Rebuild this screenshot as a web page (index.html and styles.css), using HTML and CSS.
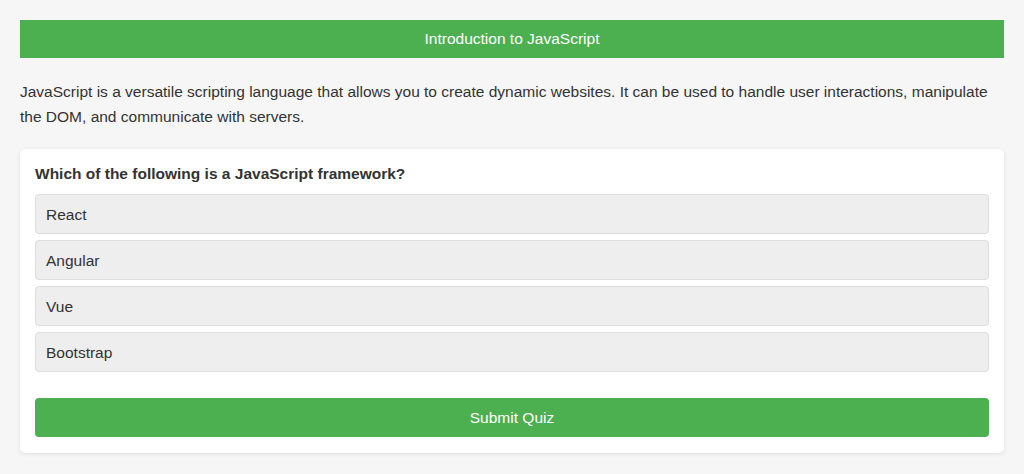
FILE: index.html
```html
<!DOCTYPE html>
<html lang="en">
<head>
<meta charset="utf-8">
<title>Introduction to JavaScript</title>
<link rel="stylesheet" href="styles.css">
</head>
<body>
  <header class="banner">Introduction to JavaScript</header>
  <p class="intro">JavaScript is a versatile scripting language that allows you to create dynamic websites. It can be used to handle user interactions, manipulate the DOM, and communicate with servers.</p>
  <section class="quiz">
    <h3 class="question">Which of the following is a JavaScript framework?</h3>
    <div class="options">
      <div class="option">React</div>
      <div class="option">Angular</div>
      <div class="option">Vue</div>
      <div class="option">Bootstrap</div>
    </div>
    <button class="submit">Submit Quiz</button>
  </section>
</body>
</html>
```
FILE: styles.css
```css
* { box-sizing: border-box; }
html, body { margin: 0; }
body {
  background: #f6f6f6;
  padding: 20px;
  font-family: "Liberation Sans", Arial, sans-serif;
  font-size: 15.5px;
  color: #333;
}
.banner {
  background: #4caf50;
  color: #fff;
  text-align: center;
  padding: 10px;
  line-height: 18px;
  height: 38px;
}
.intro {
  margin: 20px 0;
  line-height: 25px;
  padding-top: 1px;
  height: 51px;
}
.quiz {
  background: #fff;
  border-radius: 5px;
  box-shadow: 0 1px 4px rgba(0, 0, 0, 0.1);
  padding: 15px 15px 16px;
}
.question {
  margin: 0 0 12px;
  padding-top: 1px;
  font-size: 15.5px;
  font-weight: bold;
  line-height: 18px;
  height: 18px;
}
.options {
  display: flex;
  flex-direction: column;
  gap: 6px;
}
.option {
  background: #eee;
  border: 1px solid #ddd;
  border-radius: 4px;
  padding: 11px 10px 9px;
  line-height: 18px;
  height: 40px;
}
.submit {
  display: block;
  width: 100%;
  margin-top: 26px;
  height: 39px;
  background: #4caf50;
  color: #fff;
  border: none;
  border-radius: 4px;
  font-family: inherit;
  font-size: 15.5px;
  padding-top: 2px;
  cursor: pointer;
}
```
